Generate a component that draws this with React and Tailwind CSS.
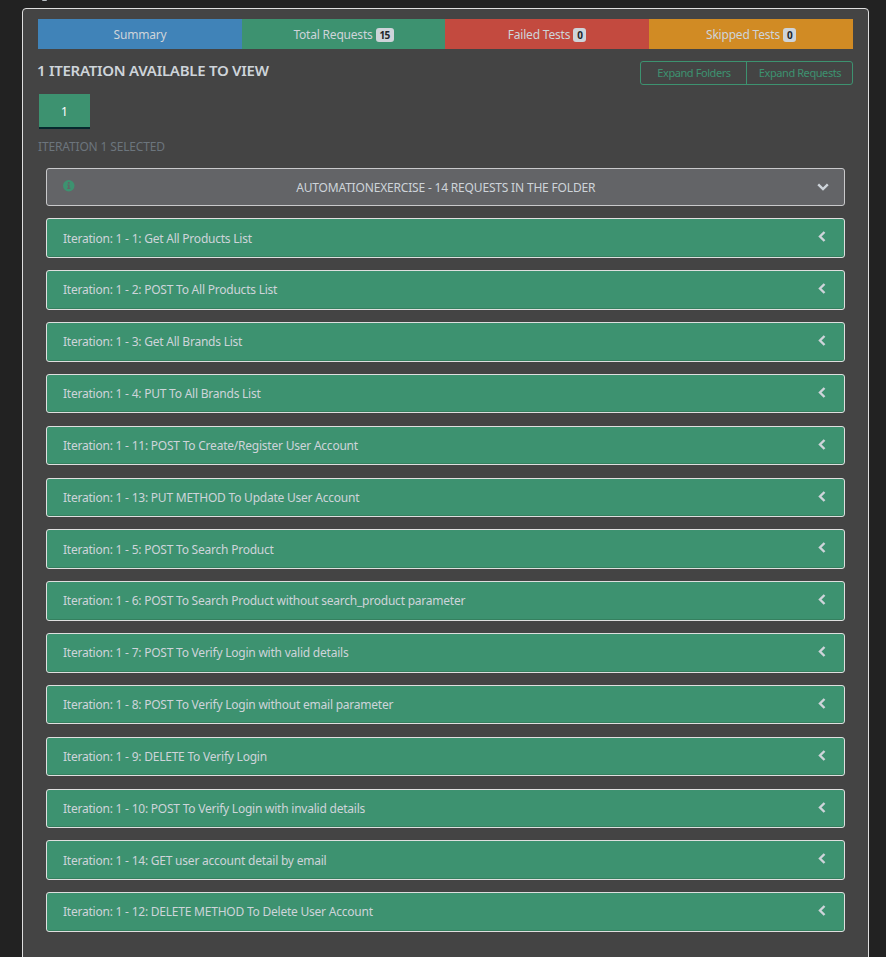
const tabs = [
  { label: 'Summary', color: 'bg-[#4083b8]' },
  { label: 'Total Requests', count: 15, color: 'bg-[#3d9270]' },
  { label: 'Failed Tests', count: 0, color: 'bg-[#c34a3f]' },
  { label: 'Skipped Tests', count: 0, color: 'bg-[#d18b24]' },
];

const requests = [
  '1: Get All Products List',
  '2: POST To All Products List',
  '3: Get All Brands List',
  '4: PUT To All Brands List',
  '11: POST To Create/Register User Account',
  '13: PUT METHOD To Update User Account',
  '5: POST To Search Product',
  '6: POST To Search Product without search_product parameter',
  '7: POST To Verify Login with valid details',
  '8: POST To Verify Login without email parameter',
  '9: DELETE To Verify Login',
  '10: POST To Verify Login with invalid details',
  '14: GET user account detail by email',
  '12: DELETE METHOD To Delete User Account',
];

function Badge({ children }) {
  return (
    <span className="ml-[3px] flex h-[14px] items-center rounded-[3px] bg-[#ced4da] px-[4px] text-[10px] font-bold tracking-[-0.7px] text-[#212529]">
      {children}
    </span>
  );
}

function RequestRow({ title }) {
  return (
    <div className="flex h-[39.45px] items-center justify-between rounded-[3px] border border-[#dfdfdf] bg-[#3d9270] pr-[18px] pl-4 text-[12px] tracking-[-0.225px] text-[#ced4da] shadow-[inset_0_-1px_0_#35805f]">
      <span className="pt-px whitespace-pre">Iteration: 1 - {title}</span>
      <svg className="mb-[2.4px] h-[11px] w-[8px]" viewBox="0 0 8 11" fill="none" stroke="#ced4da" strokeWidth="2.4">
        <path d="M6.5 1 2 5.5l4.5 4.5" />
      </svg>
    </div>
  );
}

export default function App() {
  return (
    <div className="h-[957px] w-[886px] overflow-hidden bg-[#222] pr-[17px] pl-[22px] font-['Noto_Sans','Open_Sans',sans-serif] text-[#ced4da]">
      <div className="h-2">
        <div className="ml-5 h-px w-[5px] rounded-b bg-[#b9bfc4]" />
      </div>
      <div className="h-[970px] rounded-[4px] border border-[#dfdfdf] bg-[#444] px-[15px] pt-[10px]">
        <div className="grid h-[30px] grid-cols-[204px_203px_204px_204px] text-[12px] tracking-[-0.2px]">
          {tabs.map((tab) => (
            <div key={tab.label} className={`flex items-center justify-center pt-[2px] ${tab.color}`}>
              {tab.label}
              {tab.count !== undefined && <Badge>{tab.count}</Badge>}
            </div>
          ))}
        </div>

        <div className="flex h-[45px] items-start justify-between pt-3">
          <h5 className="-mt-px -ml-px text-[15px] leading-5 font-semibold tracking-[-0.27px] whitespace-nowrap">
            1 ITERATION AVAILABLE TO VIEW
          </h5>
          <div className="flex h-6 w-[213px] rounded-[3px] border border-[#3d9270] text-[11px] tracking-[-0.42px] text-[#3d9270]">
            <button className="w-[106px] border-r border-[#3d9270] pl-px">Expand Folders</button>
            <button className="flex-1 pl-px">Expand Requests</button>
          </div>
        </div>

        <button className="ml-px block h-[35px] w-[51px] border-b-2 border-[#06282d] bg-[#3d9270] pt-[2px] text-[12px] text-white">
          1
        </button>
        <h6 className="mt-2 h-[19px] text-[12px] leading-[19px] tracking-[-0.15px] text-[#6c757d]">
          ITERATION 1 SELECTED
        </h6>

        <div className="mx-2 mt-3">
          <div className="flex h-[38px] items-center justify-between rounded-[3px] border border-[#c9c9cb] bg-[#636467] pr-[15px] pl-4 text-[12px]">
            <svg className="mb-[2px] h-[11.5px] w-[11.5px]" viewBox="0 0 12 12">
              <circle cx="6" cy="6" r="6" fill="#3d9270" />
              <path d="M5.1 2.1h1.8v1.7H5.1zM4.4 4.7h2.4v3.5h.8v1.1H4.4V8.2h.8V5.8h-.8z" fill="#636467" />
            </svg>
            <span className="pt-[2px] tracking-[-0.18px]">AUTOMATIONEXERCISE - 14 REQUESTS IN THE FOLDER</span>
            <svg className="h-[8px] w-[12px]" viewBox="0 0 12 8" fill="none" stroke="#ced4da" strokeWidth="2.4">
              <path d="M1.2 1.3 6 6l4.8-4.7" />
            </svg>
          </div>
          <div className="mt-[12.44px] flex flex-col gap-[12.395px]">
            {requests.map((title) => (
              <RequestRow key={title} title={title} />
            ))}
          </div>
        </div>
      </div>
    </div>
  );
}
